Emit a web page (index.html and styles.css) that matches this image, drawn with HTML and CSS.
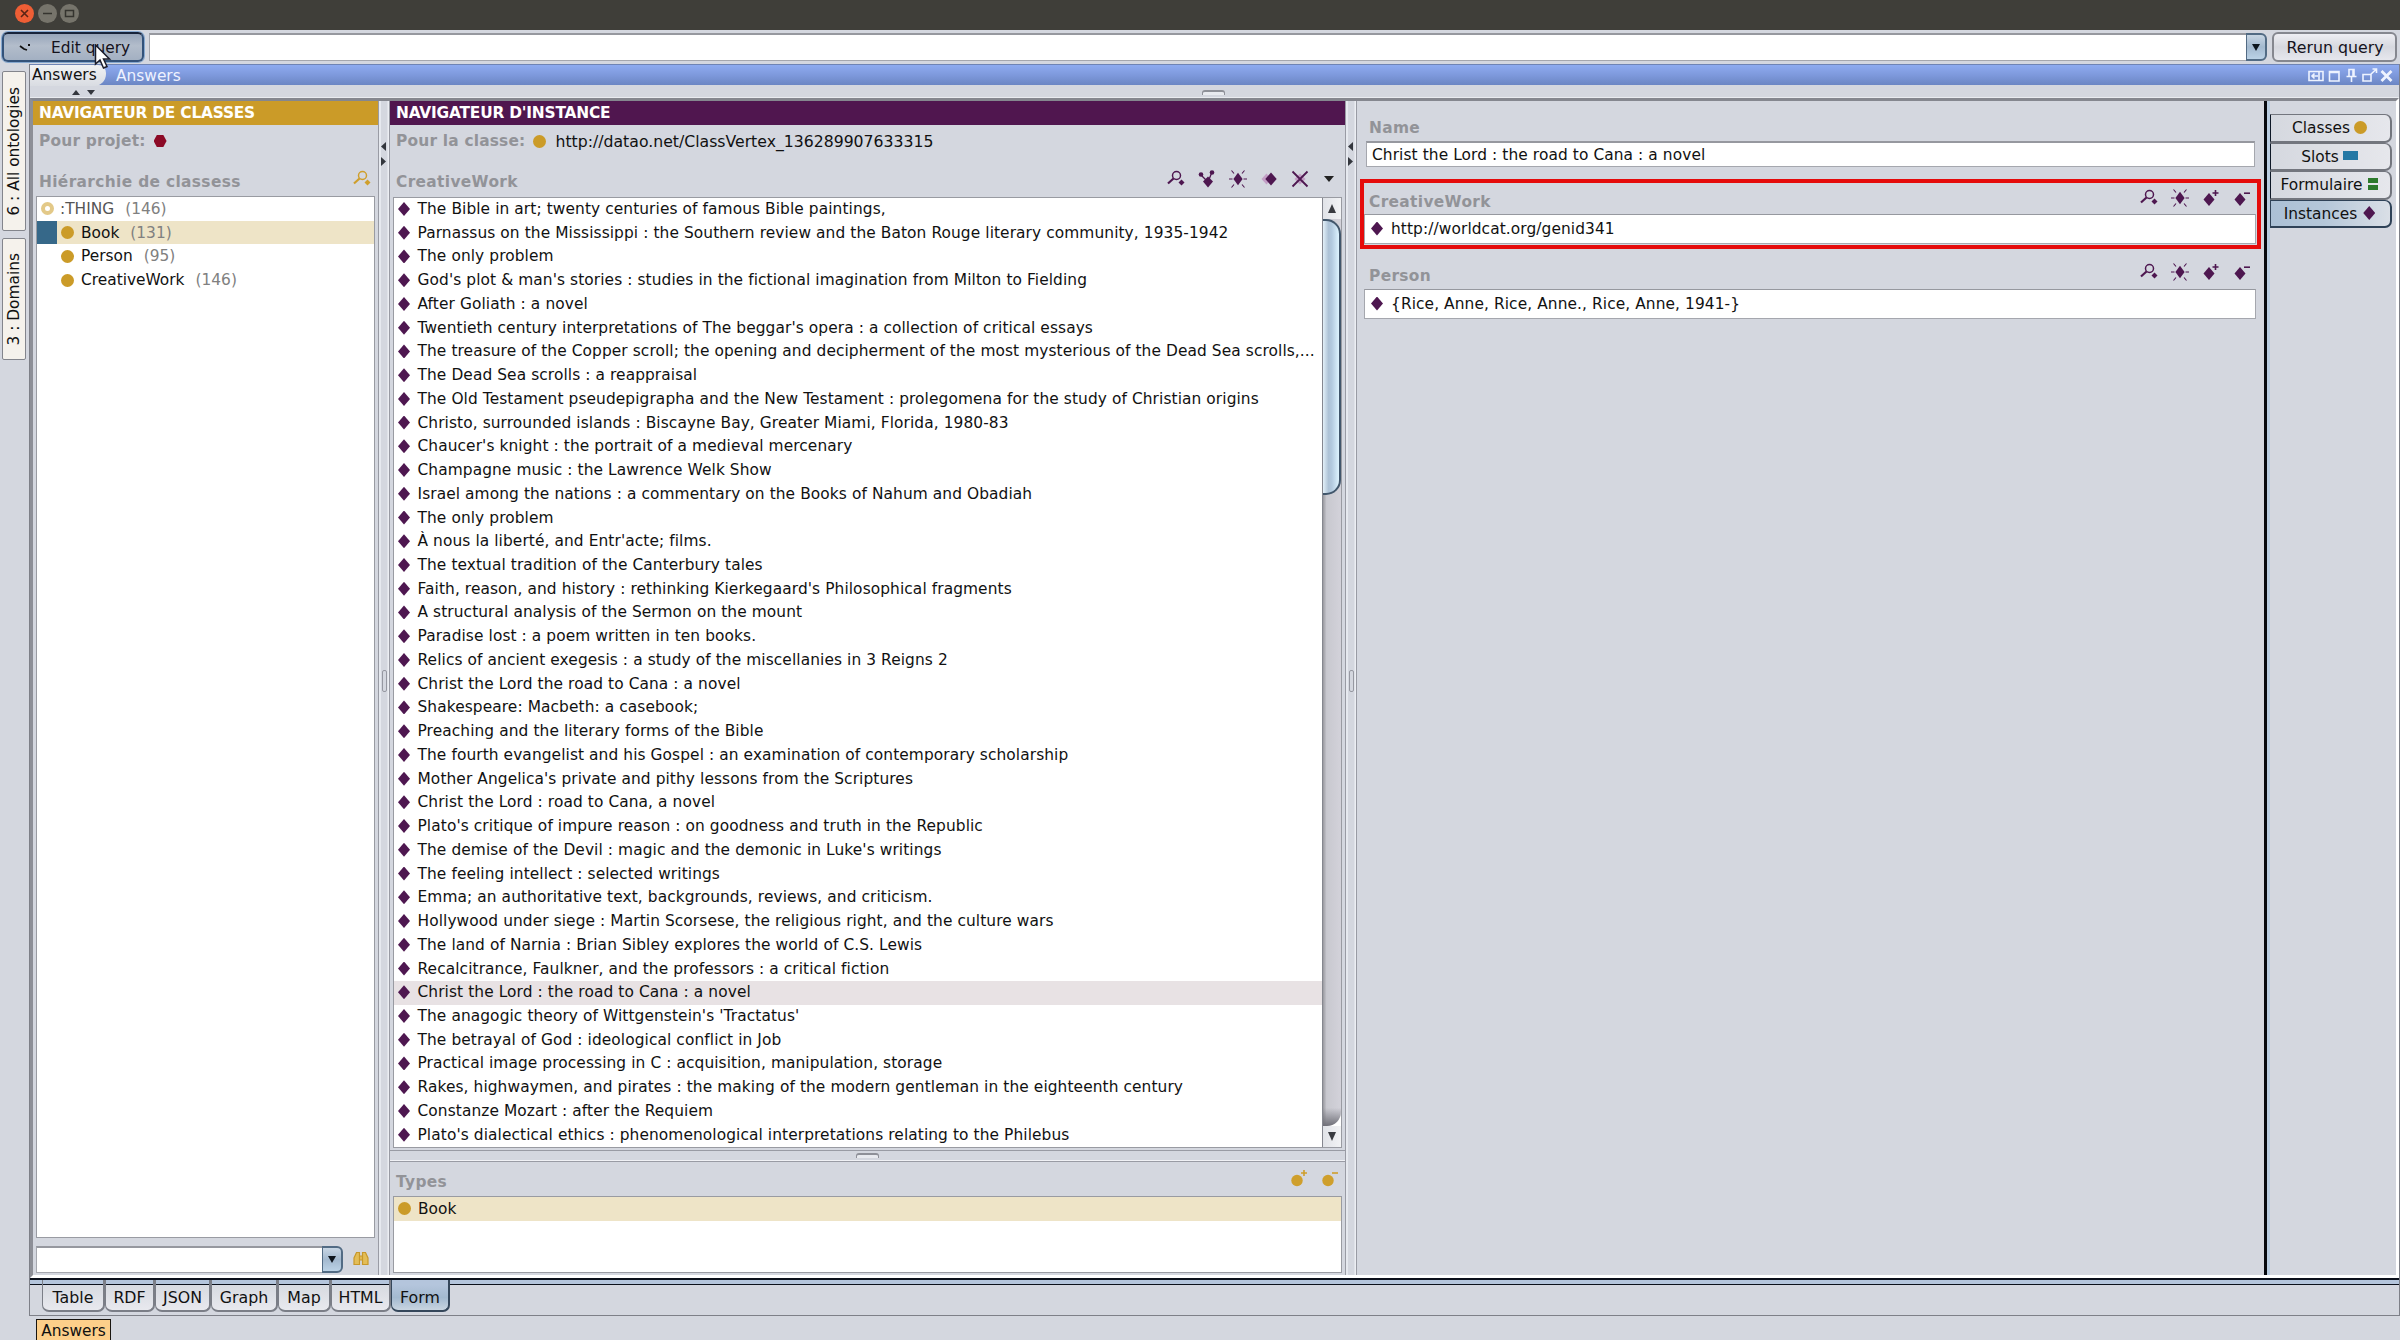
FILE: index.html
```html
<!DOCTYPE html>
<html lang="fr">
<head>
  <meta charset="UTF-8">
  <title>Answers</title>
  <link rel="stylesheet" href="styles.css">
</head>
<body>
  <!-- shared icons -->
  <svg class="defs" width="0" height="0">
    <symbol id="i-find" viewBox="0 0 18 18">
      <circle cx="9.5" cy="5.5" r="4" fill="none" stroke="currentColor" stroke-width="1.5"/>
      <path d="M6.5 8.5L1 13.5" stroke="currentColor" stroke-width="2.2"/>
      <path d="M14.5 9.5l3 3-3 3-3-3z" fill="currentColor"/>
    </symbol>
    <symbol id="i-graph" viewBox="0 0 18 18">
      <path d="M3 5l7 7 4-10" fill="none" stroke="currentColor" stroke-width="1.3"/>
      <circle cx="3" cy="4.5" r="2.3" fill="currentColor"/>
      <circle cx="14" cy="2.5" r="2.3" fill="currentColor"/>
      <path d="M10 6.5l5 5-5 6-5-6z" fill="currentColor"/>
    </symbol>
    <symbol id="i-new" viewBox="0 0 18 18">
      <path d="M9 2.8l4.6 6.2L9 15.2 4.400 9z" fill="currentColor"/>
      <path d="M0 9h3.500M14.500 9H18M2.500 0.500L5 3.500M15.500 0.500L13 3.500M2.500 17.500L5 14.500M15.500 17.500L13 14.500" stroke="currentColor" stroke-width="1.1"/>
    </symbol>
    <symbol id="i-copy" viewBox="0 0 18 18">
      <path d="M6.500 3.500l5 5.500-5 5.500-5-5.500z" fill="#c39fc6"/>
      <path d="M11 2.500l5.700 6.500-5.700 6.500-5.700-6.500z" fill="currentColor"/>
    </symbol>
    <symbol id="i-del" viewBox="0 0 18 18">
      <path d="M9 3.500l5.500 5.500L9 14.500 3.500 9z" fill="#c39fc6"/>
      <path d="M1.500 1.500l15 15M16.500 1.500l-15 15" stroke="currentColor" stroke-width="1.8"/>
    </symbol>
    <symbol id="i-add" viewBox="0 0 18 18">
      <path d="M7 4l5.500 6.500L7 17 1.500 10.500z" fill="currentColor"/>
      <path d="M10.500 4h6M13.500 1v6" stroke="currentColor" stroke-width="1.6"/>
    </symbol>
    <symbol id="i-sub" viewBox="0 0 18 18">
      <path d="M7 4l5.500 6.500L7 17 1.500 10.500z" fill="currentColor"/>
      <path d="M11 4.200h6" stroke="currentColor" stroke-width="1.6"/>
    </symbol>
    <symbol id="i-cadd" viewBox="0 0 18 18">
      <circle cx="7" cy="11.500" r="5.700" fill="currentColor"/>
      <path d="M11 4h6M14 1v6" stroke="currentColor" stroke-width="1.6"/>
    </symbol>
    <symbol id="i-csub" viewBox="0 0 18 18">
      <circle cx="7" cy="11.500" r="5.700" fill="currentColor"/>
      <path d="M11 4h6" stroke="currentColor" stroke-width="1.6"/>
    </symbol>
  </svg>

  <div class="titlebar">
    <span class="wbtn close"><svg width="19" height="19"><path d="M6 6l7 7M13 6l-7 7" stroke="#5a2415" stroke-width="1.6"/></svg></span>
    <span class="wbtn"><svg width="19" height="19"><path d="M5 9.500h9" stroke="#35342f" stroke-width="1.5"/></svg></span>
    <span class="wbtn"><svg width="19" height="19"><path d="M5.500 6.500h8v6h-8z" fill="none" stroke="#35342f" stroke-width="1.5"/></svg></span>
  </div>

  <div class="toolbar">
    <button class="btn edit">
      <svg width="12" height="8"><path d="M1 2l4 3 3 1M9 1l2 0" fill="none" stroke="#111" stroke-width="1.8"/></svg>
      <span>Edit query</span>
    </button>
    <div class="combo query"><span class="field"></span><span class="drop"></span></div>
    <button class="btn rerun">Rerun query</button>
    <svg class="cursor" width="18" height="26" viewBox="0 0 18 26"><path d="M1.500 1v19l4.500-4 3.500 8 3.500-1.500-3.500-7.500h6z" fill="#fff" stroke="#1c1c2a" stroke-width="1.5"/></svg>
  </div>

  <div class="main">
    <div class="rail">
      <div class="vtab onto"><span>6 : All ontologies</span></div>
      <div class="vtab dom"><span>3 : Domains</span></div>
    </div>

    <div class="frame">
      <div class="caption">
        <span class="cap-tab">Answers</span>
        <span class="cap-title">Answers</span>
        <svg class="cap-icons" width="86" height="16" viewBox="0 0 86 16" fill="none" stroke="#eef3ff" stroke-width="1.6">
          <path d="M1 3.500h14v9H1zM11 3.500v9M10 8H4M6.500 5.500L4 8l2.500 2.500"/>
          <path d="M21.500 3.500h9.500v9.500h-9.500zM21.500 4.500h9.500"/>
          <path d="M41 1.500h5v7h-5zM45 1.500v7M38.500 8.500h10M43.500 8.500v5.500"/>
          <path d="M55 6.500h8v6.500h-8zM62 7l6-5.500M64.500 1h4v4"/>
          <path d="M73.500 3l10 10M83.500 3l-10 10" stroke-width="2.8"/>
        </svg>
      </div>
      <div class="hsplit top">
        <span class="tri up"></span><span class="tri down"></span><span class="grip"></span>
      </div>

      <div class="work">
        <!-- class browser -->
        <div class="classes">
          <div class="head gold">NAVIGATEUR DE CLASSES</div>
          <div class="for"><b>Pour projet:</b><i class="hex"></i></div>
          <div class="sub"><b>Hiérarchie de classess</b>
            <span class="tools gold-ink"><svg class="ic"><use href="#i-find"/></svg></span>
          </div>
          <ul class="list tree">
            <li class="root"><i class="ring"></i>:THING <em>(146)</em></li>
            <li class="sel"><i class="dot"></i>Book <em>(131)</em></li>
            <li><i class="dot"></i>Person <em>(95)</em></li>
            <li><i class="dot"></i>CreativeWork <em>(146)</em></li>
          </ul>
          <div class="search">
            <div class="combo"><span class="field"></span><span class="drop"></span></div>
            <svg class="bino" width="16" height="15" viewBox="0 0 16 15" fill="#e3bd57" stroke="#c8982a" stroke-width="1.2"><path d="M3.500 1.500h3v12H1V7zM12.500 1.500h-3v12H15V7zM6.500 5h3v4h-3z"/></svg>
          </div>
        </div>
        <div class="vsplit"><span class="tri left"></span><span class="tri right"></span><span class="vgrip"></span></div>

        <!-- instance browser -->
        <div class="instances">
          <div class="head plum">NAVIGATEUR D'INSTANCE</div>
          <div class="for"><b>Pour la classe:</b><i class="dot"></i><span class="url">http://datao.net/ClassVertex_136289907633315</span></div>
          <div class="sub"><b>CreativeWork</b>
            <span class="tools">
              <svg class="ic"><use href="#i-find"/></svg>
              <svg class="ic"><use href="#i-graph"/></svg>
              <svg class="ic"><use href="#i-new"/></svg>
              <svg class="ic"><use href="#i-copy"/></svg>
              <svg class="ic"><use href="#i-del"/></svg>
              <span class="menu"></span>
            </span>
          </div>
          <div class="scrollbox">
            <ul class="items">
              <li>The Bible in art; twenty centuries of famous Bible paintings,</li>
              <li>Parnassus on the Mississippi : the Southern review and the Baton Rouge literary community, 1935-1942</li>
              <li>The only problem</li>
              <li>God's plot &amp; man's stories : studies in the fictional imagination from Milton to Fielding</li>
              <li>After Goliath : a novel</li>
              <li>Twentieth century interpretations of The beggar's opera : a collection of critical essays</li>
              <li>The treasure of the Copper scroll; the opening and decipherment of the most mysterious of the Dead Sea scrolls,...</li>
              <li>The Dead Sea scrolls : a reappraisal</li>
              <li>The Old Testament pseudepigrapha and the New Testament : prolegomena for the study of Christian origins</li>
              <li>Christo, surrounded islands : Biscayne Bay, Greater Miami, Florida, 1980-83</li>
              <li>Chaucer's knight : the portrait of a medieval mercenary</li>
              <li>Champagne music : the Lawrence Welk Show</li>
              <li>Israel among the nations : a commentary on the Books of Nahum and Obadiah</li>
              <li>The only problem</li>
              <li>À nous la liberté, and Entr'acte; films.</li>
              <li>The textual tradition of the Canterbury tales</li>
              <li>Faith, reason, and history : rethinking Kierkegaard's Philosophical fragments</li>
              <li>A structural analysis of the Sermon on the mount</li>
              <li>Paradise lost : a poem written in ten books.</li>
              <li>Relics of ancient exegesis : a study of the miscellanies in 3 Reigns 2</li>
              <li>Christ the Lord the road to Cana : a novel</li>
              <li>Shakespeare: Macbeth: a casebook;</li>
              <li>Preaching and the literary forms of the Bible</li>
              <li>The fourth evangelist and his Gospel : an examination of contemporary scholarship</li>
              <li>Mother Angelica's private and pithy lessons from the Scriptures</li>
              <li>Christ the Lord : road to Cana, a novel</li>
              <li>Plato's critique of impure reason : on goodness and truth in the Republic</li>
              <li>The demise of the Devil : magic and the demonic in Luke's writings</li>
              <li>The feeling intellect : selected writings</li>
              <li>Emma; an authoritative text, backgrounds, reviews, and criticism.</li>
              <li>Hollywood under siege : Martin Scorsese, the religious right, and the culture wars</li>
              <li>The land of Narnia : Brian Sibley explores the world of C.S. Lewis</li>
              <li>Recalcitrance, Faulkner, and the professors : a critical fiction</li>
              <li class="sel">Christ the Lord : the road to Cana : a novel</li>
              <li>The anagogic theory of Wittgenstein's 'Tractatus'</li>
              <li>The betrayal of God : ideological conflict in Job</li>
              <li>Practical image processing in C : acquisition, manipulation, storage</li>
              <li>Rakes, highwaymen, and pirates : the making of the modern gentleman in the eighteenth century</li>
              <li>Constanze Mozart : after the Requiem</li>
              <li>Plato's dialectical ethics : phenomenological interpretations relating to the Philebus</li>
            </ul>
            <div class="scrollbar">
              <span class="sb-btn"><i class="sb-up"></i></span>
              <span class="track"><span class="thumb"></span></span>
              <span class="sb-btn"><i class="sb-down"></i></span>
            </div>
          </div>
          <div class="hsplit mid"><span class="grip"></span></div>
          <div class="sub types"><b>Types</b>
            <span class="tools gold-ink">
              <svg class="ic"><use href="#i-cadd"/></svg>
              <svg class="ic"><use href="#i-csub"/></svg>
            </span>
          </div>
          <ul class="list typelist">
            <li class="sel"><i class="dot"></i>Book</li>
          </ul>
        </div>
        <div class="vsplit"><span class="tri left"></span><span class="tri right"></span><span class="vgrip"></span></div>

        <!-- instance form -->
        <div class="form">
          <div class="slot name">
            <div class="slot-head"><b>Name</b></div>
            <div class="value">Christ the Lord : the road to Cana : a novel</div>
          </div>
          <div class="slot boxed">
            <div class="slot-head"><b>CreativeWork</b>
              <span class="tools">
                <svg class="ic"><use href="#i-find"/></svg>
                <svg class="ic"><use href="#i-new"/></svg>
                <svg class="ic"><use href="#i-add"/></svg>
                <svg class="ic"><use href="#i-sub"/></svg>
              </span>
            </div>
            <div class="value ref">http://worldcat.org/genid341</div>
          </div>
          <div class="slot person">
            <div class="slot-head"><b>Person</b>
              <span class="tools">
                <svg class="ic"><use href="#i-find"/></svg>
                <svg class="ic"><use href="#i-new"/></svg>
                <svg class="ic"><use href="#i-add"/></svg>
                <svg class="ic"><use href="#i-sub"/></svg>
              </span>
            </div>
            <div class="value ref">{Rice, Anne, Rice, Anne., Rice, Anne, 1941-}</div>
          </div>
        </div>

        <div class="sidetabs">
          <div class="stab">Classes<i class="dot"></i></div>
          <div class="stab">Slots<i class="rect"></i></div>
          <div class="stab">Formulaire<i class="bars"></i></div>
          <div class="stab on">Instances<i class="dia"></i></div>
        </div>
      </div>

      <div class="views">
        <span class="view table">Table</span>
        <span class="view rdf">RDF</span>
        <span class="view json">JSON</span>
        <span class="view graph">Graph</span>
        <span class="view map">Map</span>
        <span class="view html">HTML</span>
        <span class="view frm on">Form</span>
      </div>
    </div>
  </div>

  <div class="dock"><span class="task">Answers</span></div>
</body>
</html>
```
FILE: styles.css
```css
* {
  box-sizing: border-box;
}
body {
  margin: 0;
  width: 2400px;
  height: 1340px;
  overflow: hidden;
  display: flex;
  flex-direction: column;
  background: #d4d7df;
  font-family: "DejaVu Sans", sans-serif;
  font-size: 15.4px;
  color: #111;
}
.defs {
  position: absolute;
}
ul {
  list-style: none;
  margin: 0;
  padding: 0;
}
b {
  color: #929398;
  letter-spacing: 0.35px;
}
em {
  font-style: normal;
  color: #808080;
}

/* --- window title --- */
.titlebar {
  height: 30px;
  flex: none;
  background: #3f3e39;
  display: flex;
  gap: 3.5px;
  padding: 4px 0 0 15px;
}
.wbtn {
  width: 19px;
  height: 19px;
  border-radius: 50%;
  background: #76746b;
}
.wbtn.close {
  background: #ee5e35;
}
.wbtn svg {
  display: block;
}

/* --- toolbar --- */
.toolbar {
  position: relative;
  height: 34px;
  flex: none;
  display: flex;
  padding: 2px 3px 2px 2px;
}
.btn {
  font: inherit;
  height: 30px;
  padding: 2px 0 0;
  color: #15121c;
  border: 2px solid #85878f;
  border-radius: 6px;
  background: linear-gradient(#eeeef3, #d6d8df 50%, #e6e7ed);
}
.btn.edit {
  width: 142px;
  display: flex;
  align-items: center;
  gap: 20px;
  padding-left: 15px;
  margin-right: 5px;
  border-color: #17233a #33527a #33527a;
  background: linear-gradient(#97a5ba, #b3bdcb 45%, #a3b0c2);
  box-shadow: 0 0 0 1px #86a8cf;
}
.btn.rerun {
  width: 125px;
  margin-left: 5px;
  padding: 1px 0 0 1px;
  font-size: 15.8px;
}
.combo {
  display: flex;
  flex: 1;
}
.combo .field {
  flex: 1;
  background: #fff;
  border: 1px solid #a5a7ae;
  border-top: 2px solid #96989f;
  border-right: 0;
}
.combo .drop {
  width: 21px;
  border: 2px solid #526b84;
  border-left-width: 1px;
  border-radius: 0 6px 6px 0;
  background: linear-gradient(#c8d6e4, #a3b9cf 50%, #bbd2e6);
  display: flex;
  align-items: center;
  justify-content: center;
}
.combo .drop::after {
  content: '';
  border: 4.5px solid transparent;
  border-top: 7px solid #0d151d;
  border-bottom: 0;
}
.query {
  height: 28px;
  margin-top: 1px;
}
.cursor {
  position: absolute;
  left: 94px;
  top: 14px;
}

/* --- left rail --- */
.main {
  flex: none;
  height: 1252px;
  display: flex;
}
.rail {
  width: 29px;
  padding: 7px 0 0 2px;
  display: flex;
  flex-direction: column;
  gap: 7px;
}
.vtab {
  width: 24px;
  border: 1px solid #83858c;
  border-radius: 2px;
  background: #f5f2ec;
  display: flex;
  align-items: center;
  justify-content: center;
}
.vtab span {
  writing-mode: vertical-rl;
  transform: rotate(180deg);
  white-space: nowrap;
  font-size: 15.4px;
}
.onto {
  height: 160px;
}
.dom {
  height: 122px;
}

/* --- result frame --- */
.frame {
  width: 2371px;
  border: 1px solid #7e8088;
  border-top: 0;
  display: flex;
  flex-direction: column;
}
.caption {
  height: 21px;
  flex: none;
  display: flex;
  align-items: center;
  background: linear-gradient(#8eabf0, #7e99dc 50%, #6b86c4);
  border-top: 1px solid #6f84b4;
}
.cap-tab {
  width: 76px;
  height: 21px;
  line-height: 20px;
  padding-left: 2px;
  background: linear-gradient(#f1f2f4, #d9dce2);
  border-radius: 0 8px 12px 0;
}
.cap-title {
  color: #eef2ff;
  padding: 2px 0 0 10px;
}
.cap-icons {
  margin: 1px 5px 0 auto;
}
.hsplit {
  display: flex;
  flex: none;
}
.hsplit.top {
  height: 13px;
  border-bottom: 1px solid #e9ebf0;
  padding: 5px 0 0 42px;
  gap: 7px;
}
.tri {
  width: 8px;
  height: 5px;
  background: #33363d;
}
.tri.up {
  clip-path: polygon(50% 0, 100% 100%, 0 100%);
}
.tri.down {
  clip-path: polygon(0 0, 100% 0, 50% 100%);
}
.tri.left, .tri.right {
  width: 5px;
  height: 9px;
}
.tri.left {
  clip-path: polygon(100% 0, 100% 100%, 0 50%);
}
.tri.right {
  clip-path: polygon(0 0, 100% 50%, 0 100%);
}
.grip {
  width: 23px;
  height: 5px;
  border: 1px solid #8e9098;
  border-top-width: 2px;
  border-bottom: 0;
  border-radius: 3px 3px 0 0;
  background: #e8eaef;
}
.top .grip {
  margin-left: 1100px;
}

.work {
  height: 1180px;
  flex: none;
  display: flex;
  border: 3px solid #8b8d95;
  border-color: #85878f #fff #fff #8d8f97;
}
.vsplit {
  width: 12px;
  border: 1px solid #999ba4;
  border-width: 0 1px;
  background: linear-gradient(90deg, #e6e9ef 2px, #d4d7df 2px, #d4d7df 8px, #eceef3 9px);
  padding: 41px 0 0 2px;
}
.vsplit .tri {
  display: block;
  margin-bottom: 6px;
}
.vgrip {
  display: block;
  width: 5px;
  height: 22px;
  margin: 504px 0 0 1px;
  border: 1px solid #9698a1;
  border-radius: 2px;
}

/* --- browsers --- */
.classes {
  width: 345px;
  display: flex;
  flex-direction: column;
}
.instances {
  width: 955px;
  display: flex;
  flex-direction: column;
}
.head {
  height: 24px;
  line-height: 25px;
  padding-left: 6px;
  color: #fff;
  font-weight: bold;
  letter-spacing: -0.2px;
}
.gold {
  background: #cb9b28;
}
.plum {
  background: #50164f;
}
.for {
  height: 32px;
  display: flex;
  align-items: center;
  padding-left: 6px;
}
.for b {
  letter-spacing: 0.2px;
}
.sub {
  height: 40px;
  display: flex;
  align-items: center;
  padding: 10px 7px 0 6px;
}
.tools {
  margin-left: auto;
  display: flex;
  gap: 13px;
  align-items: center;
  color: #4e1750;
}
.sub .tools {
  margin-top: -6px;
}
.gold-ink {
  color: #cf9f2c;
}
.ic {
  width: 18px;
  height: 18px;
  display: block;
}
.menu {
  border: 5px solid transparent;
  border-top: 6px solid #222;
  border-bottom: 0;
  margin: 0 4px 0 2px;
}
.dot {
  display: inline-block;
  flex: none;
  width: 13px;
  height: 13px;
  border-radius: 50%;
  background: #cb9b28;
}
.for .dot {
  margin: 0 9px 0 8px;
}
.url {
  font-size: 15.7px;
}
.ring {
  width: 13px;
  height: 13px;
  border: 4px solid #e3c988;
  border-radius: 50%;
  margin-right: 6px;
}
.hex {
  width: 13px;
  height: 12px;
  margin-left: 8px;
  background: #8c0a26;
  clip-path: polygon(25% 0, 75% 0, 100% 50%, 75% 100%, 25% 100%, 0 50%);
}
.list {
  background: #fff;
  border: 1px solid #999ba2;
}
.list li {
  display: flex;
  align-items: center;
  height: 23.74px;
}
.list em {
  margin-left: 11px;
}
.tree {
  height: 1042px;
  margin: -1px 3px 0;
}
.tree li {
  padding-left: 24px;
}
.tree li.root {
  padding-left: 4px;
  color: #555;
}
.list .dot {
  margin-right: 7px;
}
.tree .sel {
  background: linear-gradient(90deg, #366889 20px, #eee4c7 20px);
}
.search {
  display: flex;
  align-items: center;
  margin: 8px 0 0 3px;
  height: 27px;
}
.search .combo {
  height: 27px;
  flex: none;
  width: 307px;
}
.bino {
  margin: -2px 0 0 10px;
}

.scrollbox {
  height: 951px;
  flex: none;
  margin: 0 3px;
  display: flex;
  border: 1px solid #999ba2;
  background: #fff;
}
.items {
  flex: 1;
}
.items li {
  height: 23.74px;
  line-height: 22.6px;
  padding-left: 23.5px;
  white-space: nowrap;
  letter-spacing: 0.09px;
  position: relative;
}
.items li::before, .ref::before, .dia {
  content: '';
  width: 12px;
  height: 14px;
  background: #4e1750;
  clip-path: polygon(50% 0, 100% 50%, 50% 100%, 0 50%);
}
.items li::before {
  position: absolute;
  left: 4px;
  top: 4px;
}
.items .sel {
  background: #e8e2e4;
}
.scrollbar {
  width: 19px;
  display: flex;
  flex-direction: column;
  border-left: 1px solid #85878f;
}
.sb-btn {
  height: 21px;
  display: flex;
  align-items: center;
  justify-content: center;
  background: linear-gradient(90deg, #e1e3e8, #f2f3f5);
}
.sb-up, .sb-down {
  width: 8px;
  height: 9px;
  background: #393b40;
  clip-path: polygon(50% 0, 100% 100%, 0 100%);
}
.sb-down {
  clip-path: polygon(0 0, 100% 0, 50% 100%);
}
.track {
  flex: 1;
  background: linear-gradient(transparent 98%, #707078), linear-gradient(90deg, #99999f, #c8c8cf 20%, #d3d2da);
  border-radius: 0 0 14px 0;
}
.thumb {
  display: block;
  height: 276px;
  border: 2px solid #41566b;
  border-left: 0;
  border-radius: 0 15px 15px 0;
  background: linear-gradient(90deg, #e3f0f8, #adc2d6 35%, #b3cadf 55%, #def4ff);
}
.hsplit.mid {
  height: 12px;
  margin-top: 2px;
  border: 1px solid #999ba4;
  border-width: 1px 0;
  box-shadow: inset 0 -1px #f0f1f5;
  padding: 2px 0 0 466px;
}
.sub.types {
  height: 34px;
  padding: 6px 6px 0;
}
.types .tools {
  margin-top: -9px;
}
.typelist {
  height: 77px;
  margin: 0 3px;
}
.typelist li {
  padding-left: 4px;
}
.typelist .sel {
  background: #eee4c7;
}

/* --- form --- */
.form {
  flex: 1;
  padding: 12px 0 0 3px;
  border-right: 3px solid #05070d;
}
.slot {
  width: 901px;
}
.slot-head {
  height: 28px;
  display: flex;
  align-items: center;
  padding: 1px 10px 0 9px;
}
.value {
  height: 26px;
  background: #fff;
  border: 1px solid #a5a7ae;
  border-top: 2px solid #96989f;
  margin: 0 6px 0 6px;
  padding-left: 5px;
  line-height: 24px;
  letter-spacing: 0.09px;
}
.ref {
  display: flex;
  align-items: center;
  height: 30px;
  margin: 0 5px 0 4px;
  border-top-width: 1px;
  gap: 8px;
  padding: 0 0 1px 6px;
}
.boxed {
  margin-top: 12px;
  height: 70px;
  border: 4px solid #e50b0b;
  padding-top: 3px;
}
.boxed .slot-head {
  padding: 3px 6px 0 5px;
}
.boxed .ref {
  margin: 0 1px 0 0;
}
.person {
  padding-top: 12px;
}
.boxed .tools, .person .tools {
  margin-top: -8px;
}
.sidetabs {
  width: 129px;
  border-left: 3px solid #b9cce0;
  padding: 13px 4px 0 0;
}
.stab {
  width: 122px;
  height: 28.6px;
  border: 1px solid #73767e;
  border-width: 1px 2px 2px 1px;
  border-left-color: #0e1826;
  border-radius: 0 7px 7px 0;
  background: linear-gradient(90deg, #d5d8df, #e6e7ec);
  display: flex;
  align-items: center;
  justify-content: center;
  gap: 4px;
  padding: 1px 2px 0 0;
}
.stab.on {
  background: linear-gradient(90deg, #abc0d5, #b5c7d9 45%, #dadfe6);
  border-color: #2f4257;
  gap: 6px;
}
.stab i {
  margin-top: -2px;
}
.rect {
  width: 15px;
  height: 9px;
  background: #2478a5;
}
.bars {
  width: 10px;
  height: 12px;
  margin-left: 2px;
  border: 5px solid #2d7a2c;
  border-width: 5px 0;
}

/* --- result views --- */
.views {
  flex: 1;
  display: flex;
  border-top: 2px solid #0b101b;
  padding-left: 12px;
  background: linear-gradient(#b4c5dc 4px, #0b101b 4px, #0b101b 5px, transparent 5px);
}
.view {
  height: 32px;
  border: 2px solid #7b7e87;
  border-top: 0;
  border-left-width: 1px;
  border-radius: 0 0 7px 7px;
  padding-top: 5px;
  display: flex;
  align-items: center;
  justify-content: center;
  font-size: 15.8px;
  background: linear-gradient(transparent 5px, #d7dae1 5px, #e8e9ee);
}
.view.on {
  background: linear-gradient(#b4c5dc 5px, #a3b9cf, #c9d5e1);
  border-color: #35475b;
}
.table { width: 63px; }
.rdf { width: 50px; }
.json { width: 56px; }
.graph { width: 67px; }
.map { width: 53px; }
.html { width: 60px; }
.frm { width: 59px; }

.dock {
  padding: 3px 0 0 36px;
}
.task {
  display: block;
  width: 75px;
  height: 24px;
  line-height: 22px;
  text-align: center;
  background: #fdcf8a;
  border: 1px solid #191510;
}
```
